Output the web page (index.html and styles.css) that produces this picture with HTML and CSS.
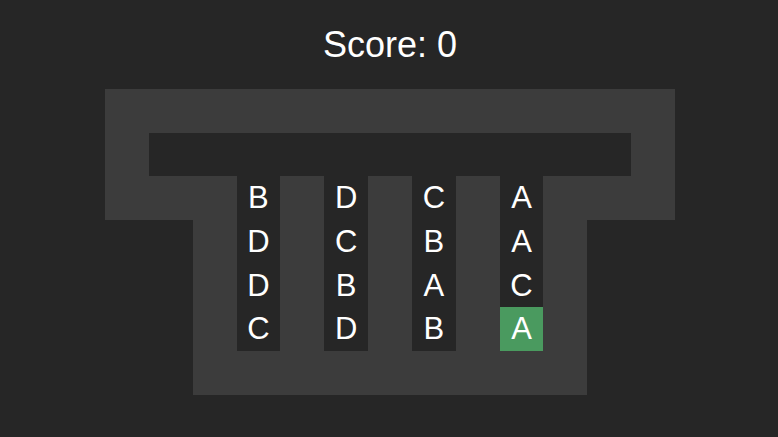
FILE: index.html
```html
<!DOCTYPE html>
<html lang="en">
<head>
    <meta charset="UTF-8">
    <title>Sort Game</title>
    <link rel="stylesheet" href="styles.css">
</head>
<body>
    <div class="score">Score: 0</div>
    <div class="board">
        <div class="top"></div>
        <div class="slot"></div>
        <div class="base"></div>
        <div class="stack c1">
            <div class="tile">B</div>
            <div class="tile">D</div>
            <div class="tile">D</div>
            <div class="tile">C</div>
        </div>
        <div class="stack c2">
            <div class="tile">D</div>
            <div class="tile">C</div>
            <div class="tile">B</div>
            <div class="tile">D</div>
        </div>
        <div class="stack c3">
            <div class="tile">C</div>
            <div class="tile">B</div>
            <div class="tile">A</div>
            <div class="tile">B</div>
        </div>
        <div class="stack c4">
            <div class="tile">A</div>
            <div class="tile">A</div>
            <div class="tile">C</div>
            <div class="tile selected">A</div>
        </div>
    </div>
</body>
</html>
```
FILE: styles.css
```css
body {
    margin: 0;
    background-color: #262626;
    font-family: "Liberation Sans", Arial, sans-serif;
    color: #fff;
}
.score {
    height: 89px;
    display: flex;
    align-items: center;
    justify-content: center;
    font-size: 36px;
    padding-left: 2px;
    box-sizing: border-box;
}
.board {
    width: 570px;
    margin: 0 0 0 105px;
    display: grid;
    grid-template-columns: repeat(13, 1fr);
    grid-template-rows: repeat(7, 43.7px);
}
.top {
    grid-column: 1 / -1;
    grid-row: 1 / 4;
    background-color: #3c3c3c;
}
.slot {
    grid-column: 2 / 13;
    grid-row: 2;
    background-color: #262626;
}
.base {
    grid-column: 3 / 12;
    grid-row: 3 / 8;
    background-color: #3c3c3c;
}
.stack {
    grid-row: 3 / 7;
    display: flex;
    flex-direction: column;
    background-color: #262626;
}
.c1 { grid-column: 4; }
.c2 { grid-column: 6; }
.c3 { grid-column: 8; }
.c4 { grid-column: 10; }
.tile {
    flex: 1;
    display: flex;
    align-items: center;
    justify-content: center;
    font-size: 31px;
}
.tile.selected {
    background-color: #4a9a5f;
}
```
